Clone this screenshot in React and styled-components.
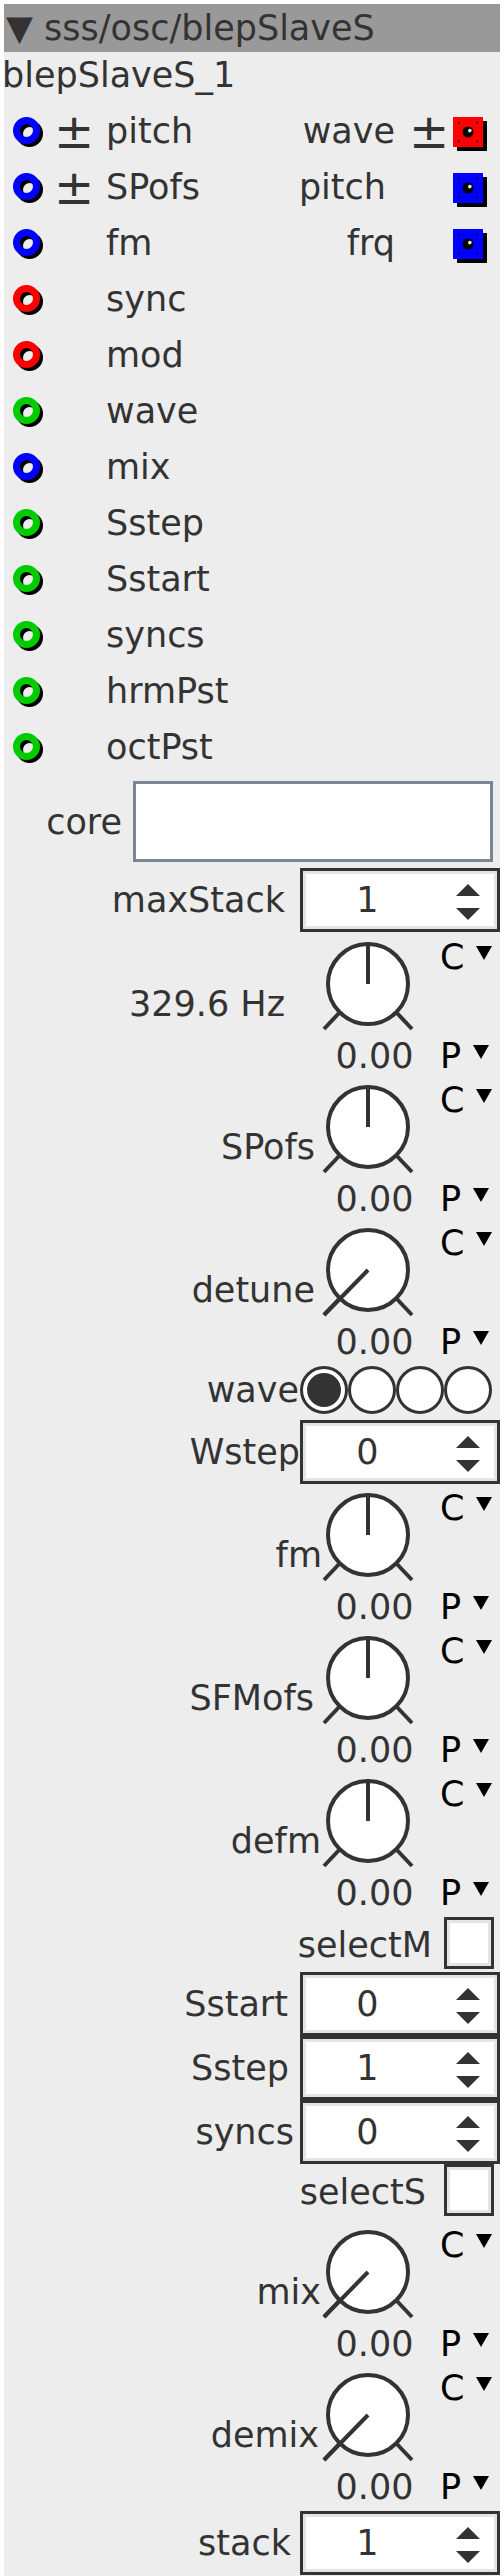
import React from "react";
import styled, { createGlobalStyle } from "styled-components";

const GlobalStyle = createGlobalStyle`
  html, body { margin: 0; padding: 0; background: #fff; }
  body { font-family: "DejaVu Sans", "Noto Sans", sans-serif; }
`;

const PORT_COLORS = { blue: "#0000ff", red: "#ff0000", green: "#00cc00" };

const ports = [
  { name: "pitch", color: "blue", pm: true, right: { name: "wave", pm: true, color: "red" } },
  { name: "SPofs", color: "blue", pm: true, right: { name: "pitch", color: "blue", pad: 9 } },
  { name: "fm", color: "blue", right: { name: "frq", color: "blue" } },
  { name: "sync", color: "red" },
  { name: "mod", color: "red" },
  { name: "wave", color: "green" },
  { name: "mix", color: "blue" },
  { name: "Sstep", color: "green" },
  { name: "Sstart", color: "green" },
  { name: "syncs", color: "green" },
  { name: "hrmPst", color: "green" },
  { name: "octPst", color: "green" },
];

// ---------- little drawings ----------
const PortRing = ({ color }) => (
  <RingSvg width="31" height="31" viewBox="0 0 31 31">
    <circle cx="16.5" cy="16.5" r="10" fill="none" stroke="#000" strokeWidth="7" />
    <circle cx="13.5" cy="13.5" r="10" fill="none" stroke={PORT_COLORS[color]} strokeWidth="7" />
  </RingSvg>
);

const PortSquare = ({ color }) => (
  <SquareSvg width="36" height="36" viewBox="0 0 36 36">
    <rect x="4" y="4" width="30" height="30" fill="#000" />
    <rect x="0" y="0" width="30" height="30" fill={PORT_COLORS[color]} />
    <rect x="5" y="5" width="1.5" height="1.5" fill="#000" />
    <rect x="23.5" y="5" width="1.5" height="1.5" fill="#000" />
    <rect x="5" y="23.5" width="1.5" height="1.5" fill="#000" />
    <rect x="23.5" y="23.5" width="1.5" height="1.5" fill="#000" />
    <circle cx="15" cy="15" r="5.5" fill="#000" />
    <circle cx="16.8" cy="13.6" r="1.8" fill="#fff" />
  </SquareSvg>
);

const Knob = ({ min }) => (
  <KnobSvg width="92" height="92" viewBox="0 0 92 92">
    <circle cx="46" cy="44" r="40" fill="#fff" stroke="#333" strokeWidth="4" />
    <g stroke="#333" strokeWidth="4">
      <line x1="18" y1="72" x2="2" y2="89" />
      <line x1="74" y1="72" x2="90" y2="89" />
      {min ? <line x1="46" y1="44" x2="2" y2="89" /> : <line x1="46" y1="44" x2="46" y2="2" />}
    </g>
  </KnobSvg>
);

// ---------- widgets ----------
const KnobWidget = ({ label, gap, min, mt }) => (
  <WidgetRow $mt={mt}>
    <KnobLabel $gap={gap}>{label}</KnobLabel>
    <KnobColumn>
      <Knob min={min} />
      <KnobValue>0.00</KnobValue>
    </KnobColumn>
    <ModeColumn>
      <ModeTop>C<Caret /></ModeTop>
      <ModeBottom>P<Caret /></ModeBottom>
    </ModeColumn>
  </WidgetRow>
);

const SpinWidget = ({ label, gap, value, mt }) => (
  <WidgetRow $mt={mt}>
    <FieldLabel $gap={gap}>{label}</FieldLabel>
    <SpinBox>
      <SpinValue>{value}</SpinValue>
      <SpinArrows>
        <ArrowUp />
        <ArrowDown />
      </SpinArrows>
    </SpinBox>
  </WidgetRow>
);

const CheckWidget = ({ label, gap }) => (
  <WidgetRow>
    <FieldLabel $gap={gap}>{label}</FieldLabel>
    <CheckBox />
  </WidgetRow>
);

const App = () => (
  <>
    <GlobalStyle />
    <Panel>
      <TitleBar>▼ sss/osc/blepSlaveS</TitleBar>
      <SubTitle>blepSlaveS_1</SubTitle>

      {ports.map((p) => (
        <PortRow key={p.name}>
          <PortRing color={p.color} />
          <PmSlot>{p.pm ? "±" : ""}</PmSlot>
          <PortLabel>{p.name}</PortLabel>
          {p.right && (
            <RightGroup>
              <RightLabel $pad={p.right.pad || 0}>{p.right.name}</RightLabel>
              <RightPm>{p.right.pm ? "±" : ""}</RightPm>
              <PortSquare color={p.right.color} />
            </RightGroup>
          )}
        </PortRow>
      ))}

      <CoreRow>
        <FieldLabel $gap={11}>core</FieldLabel>
        <CoreInput />
      </CoreRow>

      <SpinWidget label="maxStack" gap={15} value="1" mt={2} />
      <KnobWidget label="329.6 Hz" gap={37} mt={5} />
      <KnobWidget label="SPofs" gap={7} />
      <KnobWidget label="detune" gap={7} min />

      <WidgetRow>
        <FieldLabel $gap={1}>wave</FieldLabel>
        <RadioGroup>
          <Radio $on />
          <Radio />
          <Radio />
          <Radio />
        </RadioGroup>
      </WidgetRow>

      <SpinWidget label="Wstep" gap={0} value="0" mt={6} />
      <KnobWidget label="fm" gap={0} mt={4} />
      <KnobWidget label="SFMofs" gap={8} />
      <KnobWidget label="defm" gap={1} />

      <CheckWidget label="selectM" gap={12} />
      <SpinWidget label="Sstart" gap={12} value="0" />
      <SpinWidget label="Sstep" gap={11} value="1" />
      <SpinWidget label="syncs" gap={6} value="0" />
      <CheckWidget label="selectS" gap={18} />

      <KnobWidget label="mix" gap={1} min mt={6} />
      <KnobWidget label="demix" gap={3} min />
      <SpinWidget label="stack" gap={9} value="1" />
    </Panel>
  </>
);

// ================= Styled Components =================
const Panel = styled.div`
  margin: 4px 0 0 4px;
  width: 496px;
  background: #ededed;
  color: #333;
  font-size: 35px;
  padding-bottom: 30px;
`;

const TitleBar = styled.div`
  height: 48px;
  line-height: 48px;
  padding-left: 2px;
  background: #999;
  white-space: nowrap;
`;

const SubTitle = styled.div`
  line-height: 46px;
  padding-bottom: 5px;
  text-indent: -2px;
`;

const PortRow = styled.div`
  display: flex;
  align-items: center;
  height: 56px;
  padding: 0 11px 0 9px;
`;

const RingSvg = styled.svg`
  display: block;
  flex: none;
  margin-top: 3px;
`;

const PmSlot = styled.div`
  flex: none;
  width: 64px;
  padding-left: 10px;
  box-sizing: border-box;
  font-size: 48px;
  line-height: 56px;
  height: 56px;
`;

const PortLabel = styled.div`
  line-height: 56px;
  margin-left: -2px;
`;

const RightGroup = styled.div`
  display: flex;
  align-items: center;
  margin-left: auto;
`;

const RightLabel = styled.div`
  line-height: 56px;
  padding-right: ${(p) => p.$pad}px;
`;

const RightPm = styled(PmSlot)`
  width: 58px;
  padding-left: 14px;
`;

const SquareSvg = styled.svg`
  display: block;
  flex: none;
  margin-top: 8px;
`;

const WidgetRow = styled.div`
  display: flex;
  justify-content: flex-end;
  align-items: center;
  margin-top: ${(p) => p.$mt || 0}px;
`;

const FieldLabel = styled.div`
  margin-right: ${(p) => p.$gap}px;
  white-space: nowrap;
`;

const KnobLabel = styled(FieldLabel)`
  padding-bottom: 9px;
`;

const CoreRow = styled(WidgetRow)`
  padding: 6px 7px 4px 0;
`;

const CoreInput = styled.div`
  width: 360px;
  height: 81px;
  box-sizing: border-box;
  background: #fff;
  border: 3px solid #7a8693;
`;

const SpinBox = styled.div`
  display: flex;
  width: 200px;
  height: 64px;
  box-sizing: border-box;
  background: #fff;
  border: 3px solid #333;
  box-shadow: inset 0 0 0 3px #e4e4e4;
`;

const SpinValue = styled.div`
  flex: 0 0 129px;
  text-align: center;
  line-height: 58px;
`;

const SpinArrows = styled.div`
  flex: 1;
  display: flex;
  flex-direction: column;
  align-items: center;
  justify-content: center;
  gap: 12px;
  padding: 4px 0 0 7px;
`;

const ArrowUp = styled.div`
  width: 0;
  height: 0;
  border-left: 12px solid transparent;
  border-right: 12px solid transparent;
  border-bottom: 12px solid #333;
`;

const ArrowDown = styled.div`
  width: 0;
  height: 0;
  border-left: 12px solid transparent;
  border-right: 12px solid transparent;
  border-top: 12px solid #333;
`;

const KnobColumn = styled.div`
  width: 105px;
  display: flex;
  flex-direction: column;
`;

const KnobSvg = styled.svg`
  display: block;
  margin-top: 3px;
`;

const KnobValue = styled.div`
  line-height: 48px;
  text-align: center;
`;

const ModeColumn = styled.div`
  align-self: stretch;
  width: 73px;
  box-sizing: border-box;
  padding-left: 13px;
  display: flex;
  flex-direction: column;
  justify-content: space-between;
  color: #000;
`;

const ModeTop = styled.div`
  white-space: nowrap;
`;

const ModeBottom = styled.div`
  line-height: 48px;
  white-space: nowrap;
`;

const Caret = styled.span`
  display: inline-block;
  width: 0;
  height: 0;
  margin-left: 12px;
  margin-bottom: 9px;
  border-left: 8px solid transparent;
  border-right: 8px solid transparent;
  border-top: 14px solid #000;
`;

const RadioGroup = styled.div`
  display: flex;
  margin-right: 8px;
`;

const Radio = styled.div`
  width: 48px;
  height: 48px;
  box-sizing: border-box;
  border-radius: 50%;
  border: 3px solid #333;
  background: #fff;
  display: flex;
  align-items: center;
  justify-content: center;

  &::after {
    content: "";
    display: ${(p) => (p.$on ? "block" : "none")};
    width: 34px;
    height: 34px;
    border-radius: 50%;
    background: #333;
  }
`;

const CheckBox = styled.div`
  width: 50px;
  height: 52px;
  box-sizing: border-box;
  margin: 0 6px 3px 0;
  background: #fff;
  border: 3px solid #333;
  box-shadow: inset 0 0 0 3px #e4e4e4;
`;

export default App;
